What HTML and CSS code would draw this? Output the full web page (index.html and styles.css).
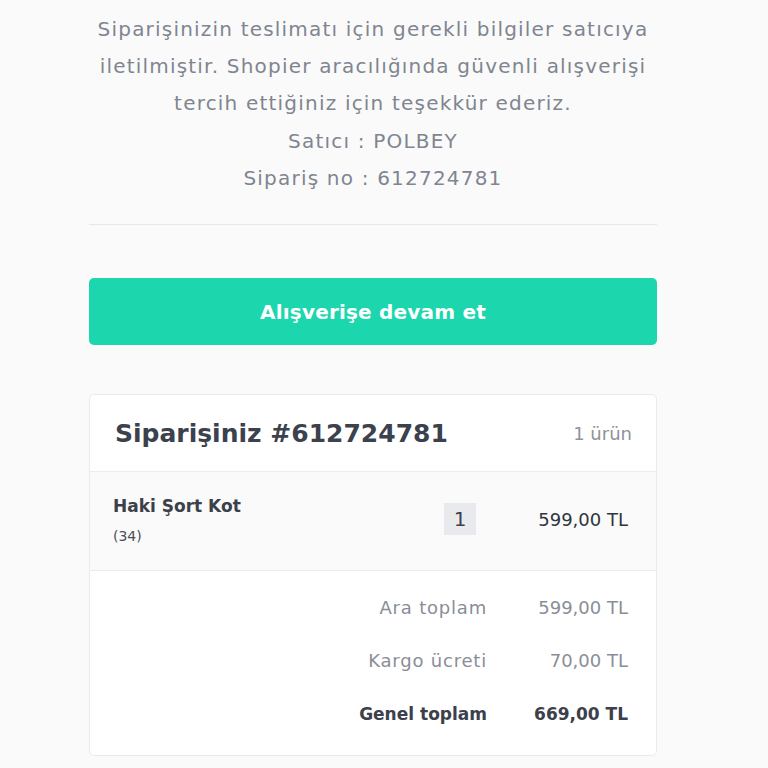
FILE: index.html
```html
<!DOCTYPE html>
<html lang="tr">
<head>
<meta charset="utf-8">
<link rel="stylesheet" href="styles.css">
</head>
<body>
<div class="page">
  <div class="intro">
    <p>Siparişinizin teslimatı için gerekli bilgiler satıcıya iletilmiştir. Shopier aracılığında güvenli alışverişi tercih ettiğiniz için teşekkür ederiz.</p>
    <p>Satıcı : POLBEY</p>
    <p>Sipariş no : 612724781</p>
  </div>
  <hr class="divider">
  <a class="btn">Alışverişe devam et</a>
  <div class="card">
    <div class="card-head">
      <h2 class="title">Siparişiniz #612724781</h2>
      <span class="count">1 ürün</span>
    </div>
    <div class="item">
      <div class="item-info">
        <div class="item-name">Haki Şort Kot</div>
        <div class="item-var">(34)</div>
      </div>
      <span class="qty">1</span>
      <span class="item-price">599,00 TL</span>
    </div>
    <div class="totals">
      <div class="trow"><span class="tlabel">Ara toplam</span><span class="tval">599,00 TL</span></div>
      <div class="trow"><span class="tlabel">Kargo ücreti</span><span class="tval">70,00 TL</span></div>
      <div class="trow grand"><span class="tlabel">Genel toplam</span><span class="tval">669,00 TL</span></div>
    </div>
  </div>
</div>
</body>
</html>
```
FILE: styles.css
```css
html, body {
  margin: 0;
  padding: 0;
  background: #fafafb;
  font-family: "DejaVu Sans", "Open Sans", sans-serif;
}
.page {
  width: 568px;
  margin-left: 89px;
  padding-top: 11px;
}
.intro {
  text-align: center;
  color: #80858f;
  font-size: 20px;
  letter-spacing: 1.2px;
  line-height: 37.2px;
}
.intro p {
  margin: 0;
}
.divider {
  border: 0;
  border-top: 1px solid #e6e7e9;
  margin: 27px 0 0;
}
.btn {
  display: flex;
  align-items: center;
  justify-content: center;
  height: 67px;
  margin-top: 53px;
  background: #1cd6ad;
  border-radius: 5px;
  color: #ffffff;
  font-size: 20px;
  font-weight: 700;
  letter-spacing: 0.2px;
}
.card {
  margin-top: 49px;
  background: #ffffff;
  border: 1px solid #e9eaec;
  border-radius: 5px;
  overflow: hidden;
}
.card-head {
  display: flex;
  align-items: center;
  justify-content: space-between;
  height: 76px;
  padding: 0 24px 0 25px;
  border-bottom: 1px solid #ebecee;
}
.title {
  margin: 0;
  font-size: 25px;
  font-weight: 700;
  color: #3b414d;
}
.count {
  font-size: 18px;
  color: #8f939b;
}
.item {
  display: flex;
  align-items: center;
  height: 94px;
  padding: 0 28px 4px 23px;
  background: #fafafa;
  border-bottom: 1px solid #ebecee;
}
.item-info {
  flex: 1;
  padding-bottom: 1px;
}
.item-name {
  font-size: 17px;
  font-weight: 700;
  color: #3b404b;
  line-height: 24px;
}
.item-var {
  margin-top: 10px;
  font-size: 14px;
  color: #4a4f59;
}
.qty {
  display: flex;
  align-items: center;
  justify-content: center;
  width: 32px;
  height: 32px;
  background: #e8eaed;
  font-size: 20px;
  color: #3d424d;
}
.item-price {
  width: 152px;
  text-align: right;
  font-size: 18px;
  color: #2f343e;
}
.totals {
  padding: 10px 28px 15px 0;
}
.trow {
  display: flex;
  justify-content: flex-end;
  align-items: center;
  height: 53px;
  font-size: 18px;
  color: #8a8e97;
}
.tlabel {
  letter-spacing: 0.8px;
}
.tval {
  width: 141px;
  text-align: right;
}
.grand {
  color: #3b404b;
}
.grand .tlabel, .grand .tval {
  font-weight: 700;
  font-size: 17px;
  letter-spacing: 0;
}
```
